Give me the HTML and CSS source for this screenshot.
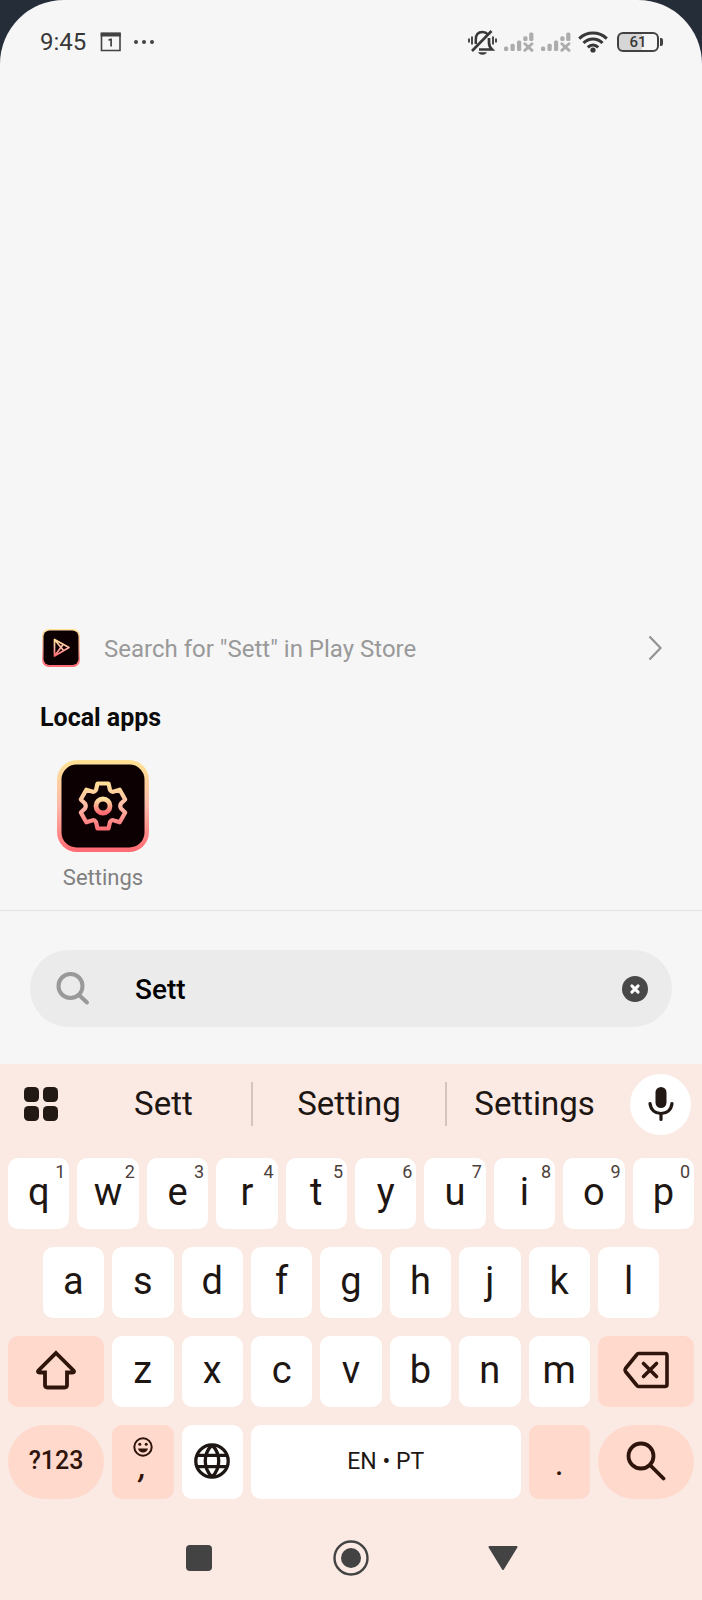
FILE: index.html
```html
<!DOCTYPE html>
<html lang="en">
<head>
<meta charset="utf-8">
<meta name="viewport" content="width=device-width, initial-scale=1">
<title>App search</title>
<link rel="stylesheet" href="styles.css">
</head>
<body>
<div class="screen">
  <header class="status-bar">
    <div class="status-group">
      <span class="clock">9:45</span>
      <svg class="calendar" width="22" height="20" viewBox="0 0 22 20"><path d="M1.500 1.500h18.500v17h-18.500z" fill="none" stroke="#424242" stroke-width="1.600"/><path d="M.7.500h20v4h-20z" fill="#424242"/><path d="M8.500 8.300l2-1h.6v7.200" fill="none" stroke="#424242" stroke-width="1.700"/></svg>
      <svg width="20" height="4" viewBox="0 0 20 4" fill="#424242"><circle cx="2" cy="2" r="2"/><circle cx="10" cy="2" r="2"/><circle cx="18" cy="2" r="2"/></svg>
    </div>
    <div class="status-group status-right">
      <svg width="29" height="25" viewBox="0 0 29 25" fill="none" stroke="#383838" stroke-width="1.800"><path d="M1 8.500v4M4 6.500v8M25 6.500v8M28 8.500v4"/><path d="M7.800 14V9.500C7.800 4.500 10.500 2 14.500 2c2 0 4 .7 5.200 2.200" stroke-width="2.500"/><path d="M21 8v4.500c0 3 1 5 3 7H11" stroke-width="2.700"/><path d="M4 21L23.500 1" stroke-width="2.600"/><path d="M10 22.200h9c-1 1.700-2.600 2.500-4.500 2.500s-3.500-.8-4.500-2.500z" fill="#383838" stroke="none"/></svg>
      <svg width="30" height="20" viewBox="0 0 30 20"><g fill="#acacac"><rect y="14.500" width="4.200" height="4.500" rx="1.500"/><rect x="6.500" y="11.700" width="4.200" height="7.300" rx="1.500"/><rect x="13" y="8.400" width="4.200" height="10.600" rx="1.500"/><rect x="19.300" y="4.300" width="4.200" height="4.700" rx="1.500"/><rect x="25.200" y=".4" width="4.200" height="8.600" rx="1.500"/></g><path d="M20.800 11.800l7.200 6.600M28 11.800l-7.200 6.600" stroke="#acacac" stroke-width="2.800" stroke-linecap="round"/></svg>
      <svg width="30" height="20" viewBox="0 0 30 20"><g fill="#acacac"><rect y="14.500" width="4.200" height="4.500" rx="1.500"/><rect x="6.500" y="11.700" width="4.200" height="7.300" rx="1.500"/><rect x="13" y="8.400" width="4.200" height="10.600" rx="1.500"/><rect x="19.300" y="4.300" width="4.200" height="4.700" rx="1.500"/><rect x="25.200" y=".4" width="4.200" height="8.600" rx="1.500"/></g><path d="M20.800 11.800l7.200 6.600M28 11.800l-7.200 6.600" stroke="#acacac" stroke-width="2.800" stroke-linecap="round"/></svg>
      <svg width="30" height="22" viewBox="0 0 30 22" fill="none" stroke="#383838" stroke-width="3.100"><path d="M1.200 7.600C9 .2 21 .2 28.800 7.600M5.500 12C11 6.600 19 6.600 24.500 12M9.800 16.300c3.200-2.900 7.200-2.900 10.400 0"/><circle cx="15" cy="19" r="2.600" fill="#383838" stroke="none"/></svg>
      <div class="battery"><span class="battery-level">61</span></div>
    </div>
  </header>

  <main class="results">
    <a class="store-link" href="#store">
      <svg width="38" height="40" viewBox="0 0 38 40"><defs><linearGradient id="warm" x1="0" y1="0" x2="0" y2="1"><stop offset="0" stop-color="#ffe295"/><stop offset=".5" stop-color="#ffb9a8"/><stop offset="1" stop-color="#ff6972"/></linearGradient></defs><rect x="0" y="1" width="38" height="38" rx="7" fill="url(#warm)"/><rect x="1.500" y="2.500" width="35" height="34.500" rx="6" fill="#0d0002"/><path d="M12.500 11.500v16.500L27 19.500zM12.500 11.500l9 11M12.500 28l9-12" fill="none" stroke="url(#warm)" stroke-width="1.700" stroke-linejoin="round"/></svg>
      <span class="store-text">Search for "Sett" in Play Store</span>
      <svg width="14" height="26" viewBox="0 0 14 26"><path d="M1.500 1.500L12.500 13 1.500 24.500" fill="none" stroke="#929292" stroke-width="2.200"/></svg>
    </a>
    <h1 class="section-title">Local apps</h1>
    <div class="apps">
      <a class="app" href="#settings">
        <svg width="92" height="92" viewBox="0 0 92 92"><defs><linearGradient id="gear" gradientUnits="userSpaceOnUse" x1="0" y1="-25" x2="0" y2="25"><stop offset="0" stop-color="#ffe295"/><stop offset=".5" stop-color="#ffbba8"/><stop offset="1" stop-color="#ff6972"/></linearGradient><linearGradient id="hub" x1="0" y1="0" x2="0" y2="1"><stop offset="0" stop-color="#ffe0a0"/><stop offset="1" stop-color="#ff6972"/></linearGradient></defs><rect width="92" height="92" rx="20" fill="url(#warm)"/><rect x="4.500" y="4.500" width="83" height="83" rx="15" fill="#0d0002"/><g transform="translate(46 46)" fill="none" stroke-width="4.200" stroke-linejoin="round"><path d="M-5.500-22.500H5.500L7-16Q8.500-13.500 11-14.500L16.700-16.300 22.200-6.500 18-2.500Q16.500 0 18 2.500L22.200 6.500 16.700 16.300 11 14.500Q8.500 13.500 7 16L5.500 22.500H-5.500L-7 16Q-8.500 13.500-11 14.500L-16.700 16.300-22.200 6.500-18 2.500Q-16.500 0-18-2.500L-22.200-6.500-16.700-16.300-11-14.500Q-8.500-13.500-7-16Z" stroke="url(#gear)"/><circle r="7" stroke="url(#hub)" stroke-width="4.800"/></g></svg>
        <span class="app-name">Settings</span>
      </a>
    </div>
  </main>

  <form class="search-area">
    <div class="search-box">
      <svg width="34" height="34" viewBox="0 0 34 34" fill="none" stroke="#999" stroke-width="4" stroke-linecap="round"><circle cx="14.500" cy="14" r="12"/><path d="M23.500 23.500l7.500 7"/></svg>
      <input class="search-input" type="text" value="Sett" aria-label="Search apps">
      <button class="clear" type="button" aria-label="Clear"><svg width="26" height="26" viewBox="0 0 26 26"><circle cx="13" cy="13" r="13" fill="#484848"/><path d="M9.900 9.900l6.200 6.200M16.100 9.900l-6.200 6.200" stroke="#fff" stroke-width="3" stroke-linecap="round"/></svg></button>
    </div>
  </form>

  <section class="keyboard" aria-label="Keyboard">
    <div class="strip">
      <button class="grid-button" aria-label="Keyboard menu"><svg width="34" height="34" viewBox="0 0 34 34" fill="#231914"><rect width="15" height="15" rx="4.500"/><rect x="19" width="15" height="15" rx="4.500"/><rect y="19" width="15" height="15" rx="4.500"/><rect x="19" y="19" width="15" height="15" rx="4.500"/></svg></button>
      <div class="suggestions">
        <button class="suggestion">Sett</button>
        <button class="suggestion suggestion-main">Setting</button>
        <button class="suggestion">Settings</button>
      </div>
      <button class="mic" aria-label="Voice input"><svg width="26" height="36" viewBox="0 0 26 36"><rect x="7.500" y="1" width="11" height="21" rx="5.500" fill="#231914"/><path d="M2 17.500c.8 6.500 5.500 10 11 10s10.200-3.500 11-10M13 28v5.500" fill="none" stroke="#231914" stroke-width="3.200" stroke-linecap="round"/></svg></button>
    </div>
    <div class="keys">
      <button class="key">q<span class="hint">1</span></button>
      <button class="key">w<span class="hint">2</span></button>
      <button class="key">e<span class="hint">3</span></button>
      <button class="key">r<span class="hint">4</span></button>
      <button class="key">t<span class="hint">5</span></button>
      <button class="key">y<span class="hint">6</span></button>
      <button class="key">u<span class="hint">7</span></button>
      <button class="key">i<span class="hint">8</span></button>
      <button class="key">o<span class="hint">9</span></button>
      <button class="key">p<span class="hint">0</span></button>

      <button class="key key-indent">a</button>
      <button class="key">s</button>
      <button class="key">d</button>
      <button class="key">f</button>
      <button class="key">g</button>
      <button class="key">h</button>
      <button class="key">j</button>
      <button class="key">k</button>
      <button class="key">l</button>

      <button class="key key-tint key-shift" aria-label="Shift"><svg width="42" height="40" viewBox="0 0 42 40"><path d="M21 3L38.500 20.500q1.500 2-1 2H32V35q0 2.500-2.500 2.500h-17Q10 37.500 10 35V22.500H4.500q-2.500 0-1-2z" fill="none" stroke="#2f140b" stroke-width="3.800" stroke-linejoin="miter"/></svg></button>
      <button class="key">z</button>
      <button class="key">x</button>
      <button class="key">c</button>
      <button class="key">v</button>
      <button class="key">b</button>
      <button class="key">n</button>
      <button class="key">m</button>
      <button class="key key-wide key-tint" aria-label="Backspace"><svg width="48" height="38" viewBox="0 0 48 38" fill="none" stroke="#2f140b" stroke-width="3.600" stroke-linecap="round" stroke-linejoin="round"><path d="M16.500 2.500H43q2 0 2 2v29q0 2-2 2H16.500q-1 0-2-1.500L3.500 20.500q-1-1.500 0-3L14.500 4q1-1.500 2-1.500z"/><path d="M21.500 12.500l13 13M34.500 12.500l-13 13"/></svg></button>

      <button class="key key-wide key-tint key-pill key-symbols">?123</button>
      <button class="key key-tint key-comma" aria-label="Comma and emoji"><svg width="20" height="20" viewBox="0 0 20 20"><circle cx="10" cy="10" r="8.700" fill="none" stroke="#2f140b" stroke-width="2"/><circle cx="6.800" cy="7.300" r="1.500" fill="#2f140b"/><circle cx="13.200" cy="7.300" r="1.500" fill="#2f140b"/><path d="M5 11.500h10c-.7 2.500-2.600 4-5 4s-4.300-1.500-5-4z" fill="#2f140b"/></svg><span class="comma">,</span></button>
      <button class="key" aria-label="Change language"><svg width="36" height="36" viewBox="0 0 36 36" fill="none" stroke="#1d1613" stroke-width="3.300"><circle cx="18" cy="18" r="16.200"/><path d="M18 2c-9 9-9 23 0 32M18 2c9 9 9 23 0 32M3 12.300h30M3 23.700h30"/></svg></button>
      <button class="key key-space">EN • PT</button>
      <button class="key key-tint key-period">.</button>
      <button class="key key-wide key-tint key-pill" aria-label="Search"><svg width="40" height="40" viewBox="0 0 40 40" fill="none" stroke="#2f140b" stroke-width="3.800" stroke-linecap="round"><circle cx="15" cy="15" r="12.500"/><path d="M24 24l13.500 13.500"/></svg></button>
    </div>
    <nav class="nav-bar">
      <button class="nav-button" aria-label="Recent apps"><svg width="36" height="36" viewBox="0 0 36 36"><rect x="5" y="5" width="26" height="26" rx="4" fill="#434343"/></svg></button>
      <button class="nav-button" aria-label="Home"><svg width="36" height="36" viewBox="0 0 36 36"><circle cx="18" cy="18" r="16.500" fill="none" stroke="#434343" stroke-width="2.400"/><circle cx="18" cy="18" r="10" fill="#434343"/></svg></button>
      <button class="nav-button" aria-label="Back"><svg width="36" height="36" viewBox="0 0 36 36"><path d="M4.500 7h27L18 29z" fill="#434343" stroke="#434343" stroke-width="2" stroke-linejoin="round"/></svg></button>
    </nav>
  </section>
</div>
</body>
</html>
```

FILE: styles.css
```css
* {
  box-sizing: border-box;
}

body {
  margin: 0;
  background: #252d39;
  font-family: Roboto, "Liberation Sans", sans-serif;
}

button {
  margin: 0;
  padding: 0;
  border: 0;
  background: none;
  font: inherit;
  color: inherit;
}

svg {
  display: block;
  flex: none;
}

a {
  color: inherit;
  text-decoration: none;
}

.screen {
  display: flex;
  flex-direction: column;
  min-height: 100vh;
  overflow: hidden;
  border-radius: 64px 64px 0 0;
  background: #f6f6f6;
}

.status-bar {
  display: flex;
  justify-content: space-between;
  align-items: center;
  padding: 28px 39px 0 40px;
}

.status-group {
  display: flex;
  align-items: center;
}

.status-right {
  gap: 7px;
}

.clock {
  font-size: 24px;
  line-height: 28px;
  color: #383838;
}

.calendar {
  margin: 0 12px 0 14px;
}

.battery {
  position: relative;
  display: flex;
  align-items: center;
  justify-content: center;
  width: 42px;
  height: 20px;
  margin: 0 4px 0 2px;
  border: 2px solid #424242;
  border-radius: 6px;
  background: linear-gradient(90deg, #d6d6d6 60%, #f6f6f6 60%);
}

.battery::after {
  content: "";
  position: absolute;
  top: 4px;
  right: -6px;
  width: 3px;
  height: 8px;
  border-radius: 0 2px 2px 0;
  background: #424242;
}

.battery-level {
  font-size: 15px;
  font-weight: 500;
  line-height: 16px;
  color: #383838;
}

.results {
  display: flex;
  flex: 1;
  flex-direction: column;
  justify-content: flex-end;
  padding-bottom: 19px;
  border-bottom: 1px solid #e4e4e4;
}

.store-link {
  display: flex;
  align-items: center;
  padding: 0 40px 0 42px;
}

.store-text {
  flex: 1;
  margin-left: 24px;
  padding-top: 2px;
  font-size: 24px;
  line-height: 28px;
  color: #999;
}

.section-title {
  margin: 35px 40px 0;
  font-size: 25px;
  font-weight: 700;
  line-height: 30px;
  color: #0b0b0b;
}

.apps {
  display: flex;
  padding: 27px 40px 0;
}

.app {
  display: flex;
  flex-direction: column;
  align-items: center;
  width: 126px;
  gap: 13px;
}

.app-name {
  font-size: 22px;
  line-height: 26px;
  color: #808080;
}

.search-area {
  padding: 39px 30px 37px;
}

.search-box {
  display: flex;
  align-items: center;
  height: 77px;
  padding: 0 24px 0 26px;
  border-radius: 39px;
  background: #ebebeb;
}

.search-input {
  flex: 1;
  min-width: 0;
  margin-left: 45px;
  padding: 2px 0 0;
  border: 0;
  outline: 0;
  background: none;
  font: 500 28px/34px Roboto, "Liberation Sans", sans-serif;
  color: #000;
}

.keyboard {
  background: #fbe9e3;
  color: #1d1613;
}

.strip {
  display: flex;
  align-items: center;
  height: 80px;
  padding: 0 11px 0 24px;
}

.suggestions {
  display: flex;
  flex: 1;
  margin: 0 8px 0 18px;
}

.suggestion {
  flex: 10;
  height: 44px;
  font-size: 33px;
  line-height: 44px;
}

.suggestion-main {
  flex-grow: 11;
}

.suggestion + .suggestion {
  border-left: 2px solid #d3c3be;
}

.mic {
  display: grid;
  place-items: center;
  width: 61px;
  height: 61px;
  border-radius: 50%;
  background: #fff;
}

.keys {
  display: grid;
  grid-template-columns: repeat(20, minmax(0, 1fr));
  grid-template-rows: 71px 71px 71px 74px;
  gap: 18px 8px;
  padding: 14px 8px 0;
}

.key {
  position: relative;
  display: flex;
  align-items: center;
  justify-content: center;
  grid-column: span 2;
  padding-bottom: 3px;
  border-radius: 10px;
  background: #fff;
  font-size: 38px;
  line-height: 44px;
}

.key-indent {
  grid-column: 2 / span 2;
}

.key-shift {
  grid-column: 1 / span 3;
}

.key-wide {
  grid-column: span 3;
}

.key-tint {
  background: #fed9cc;
  color: #2f140b;
}

.key-pill {
  border-radius: 37px;
}

.key-symbols {
  font-size: 25px;
  font-weight: 500;
}

.key-space {
  grid-column: span 8;
  padding: 0;
  font-size: 23px;
}

.key-comma {
  flex-direction: column;
  justify-content: flex-start;
  padding-top: 12px;
}

.comma {
  font-size: 32px;
  font-style: italic;
  font-weight: 500;
  line-height: 20px;
}

.key-period {
  padding-top: 4px;
  font-size: 34px;
}

.hint {
  position: absolute;
  top: 4px;
  right: 4px;
  font-size: 18px;
  line-height: 20px;
  color: #4c403b;
}

.nav-bar {
  display: flex;
  justify-content: center;
  gap: 116px;
  padding: 41px 0 24px;
}
```
